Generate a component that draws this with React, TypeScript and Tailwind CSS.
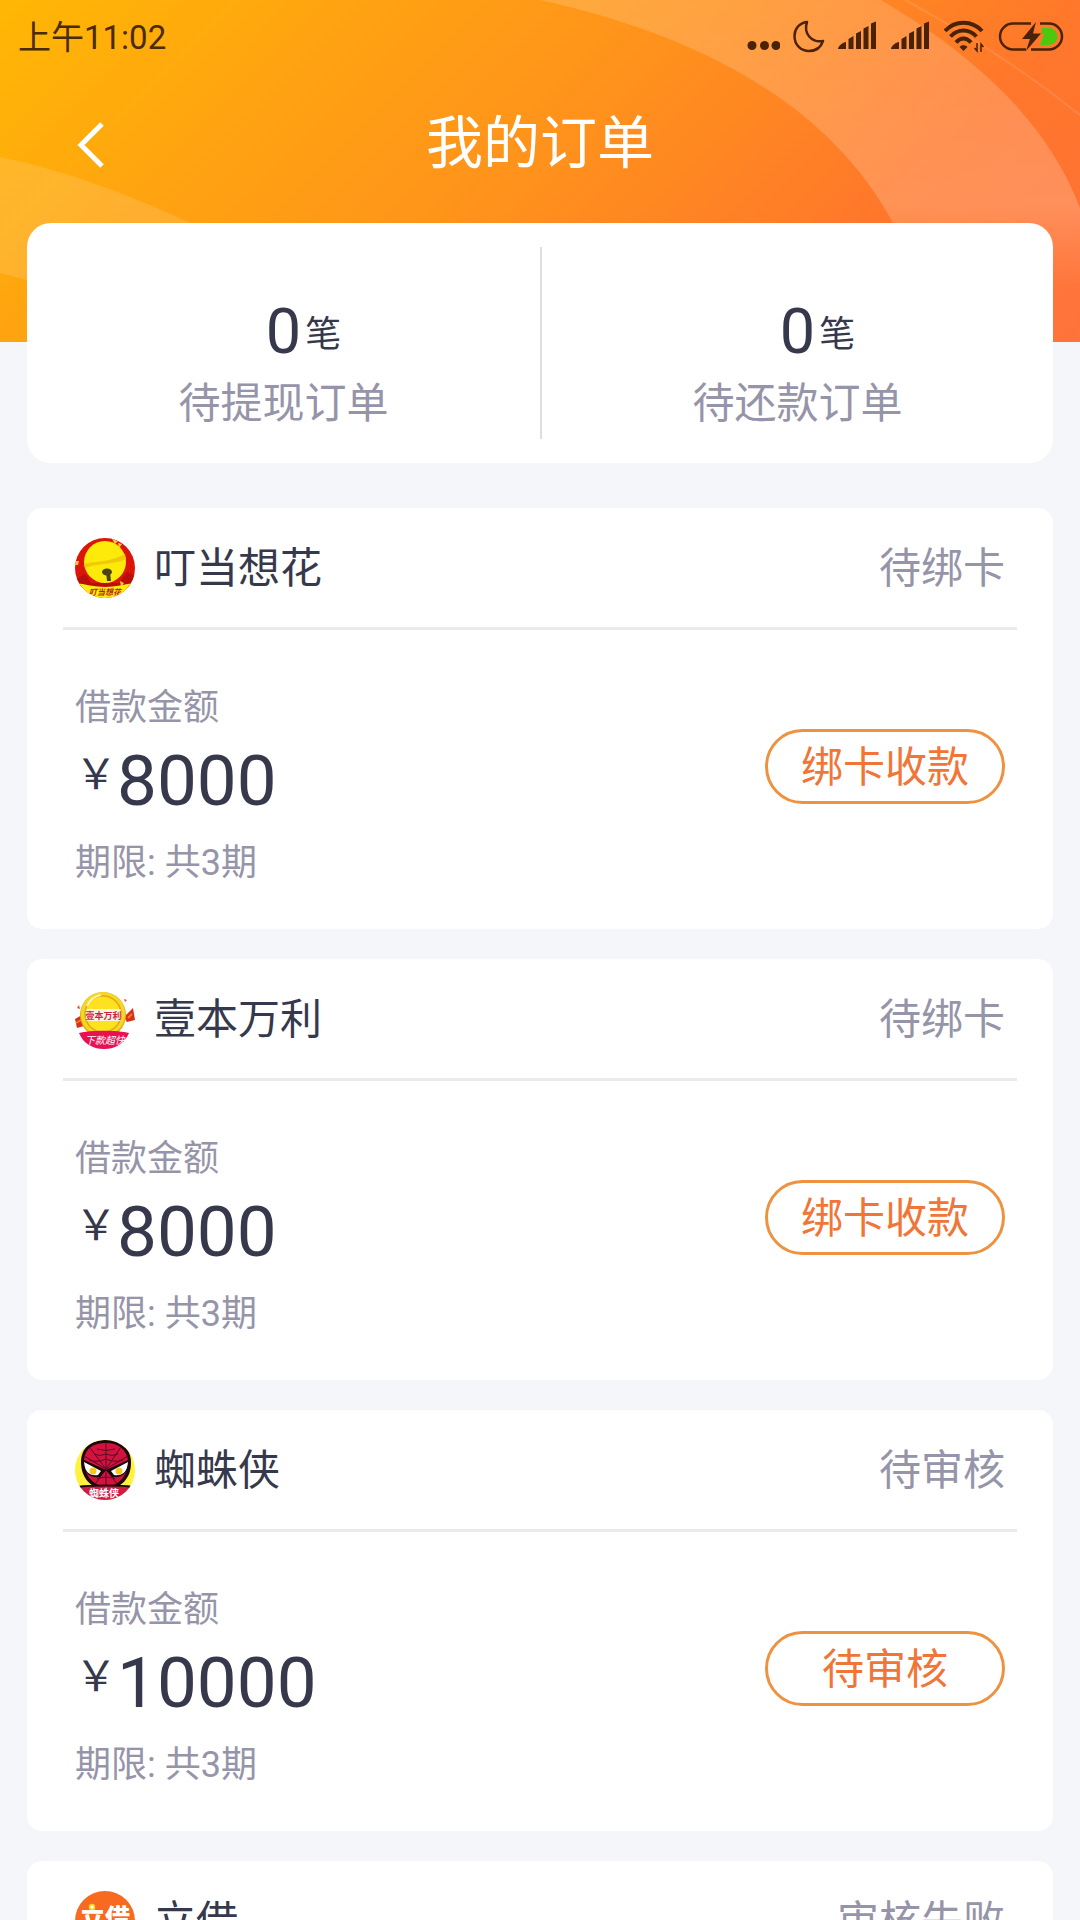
import type { ReactNode } from 'react';

type Order = {
  name: string;
  status: string;
  logo: ReactNode;
  amount?: string;
  term?: string;
  action?: string;
};

const logoFont = '"Noto Sans CJK SC", sans-serif';

const DingdangLogo = () => (
  <svg className="w-[60px] h-[60px] rounded-full" viewBox="0 0 60 60">
    <rect width="60" height="60" fill="#dc1409" />
    <path d="M0 42 L10 36 L16 45 H44 L52 34 L60 38 V50 H0Z" fill="#b80f0a" />
    <circle cx="30" cy="24" r="21" fill="#fdea0b" />
    <path d="M9 26 C20 23 36 24 50 16 L51 21 C38 27 22 25 10 30Z" fill="#eecb06" />
    <path d="M37 1 l6 2 -3 3Z M43 5 l4 1 -3 4Z M0 23 h4 l-1 4 -3 0Z M45 43 l4 2 -3 4Z" fill="#ffc93a" />
    <path d="M0 45 C10 46 20 49 30 49 C40 49 50 46 60 45 V60 H0Z" fill="#ffec12" />
    <ellipse cx="32" cy="34" rx="5" ry="3.5" fill="#4b4310" />
    <path d="M31 34 L35 34 L36 43 L32 43Z" fill="#4b4310" />
    <text x="30" y="57" fontSize="8" fontWeight="700" fontStyle="italic" textAnchor="middle" fill="#b3260b" fontFamily={logoFont}>叮当想花</text>
  </svg>
);

const YibenLogo = () => (
  <svg className="w-[60px] h-[60px]" viewBox="0 0 60 60">
    <path d="M0 30 L7 26 L9 37 L2 39Z" fill="#d8301c" />
    <path d="M49 28 L58 19 L60 31 L52 33Z" fill="#d8301c" />
    <path d="M1 34 l5 -3 M53 29 l4 -4" stroke="#f3792a" strokeWidth="2" />
    <path d="M2 19 l2 -3 1 4Z M49 10 l3 1 -2 2Z" fill="#e84b26" />
    <circle cx="28" cy="26" r="23" fill="#e3b112" />
    <circle cx="28" cy="25" r="22" fill="#f6d628" />
    <circle cx="28" cy="25" r="18" fill="#ffe21f" stroke="#e2ab10" strokeWidth="1.5" />
    <path d="M12 17 A19 19 0 0 1 26 6" fill="none" stroke="#fff6a8" strokeWidth="2" />
    <rect x="11" y="20" width="35" height="12" rx="2" fill="#fff3e6" />
    <text x="28.500" y="29.500" fontSize="9" fontWeight="700" textAnchor="middle" fill="#d01f3b" fontFamily={logoFont}>壹本万利</text>
    <path d="M4 44 C15 41 43 41 54 44 C50 54 41 60 29 60 C17 60 8 54 4 44Z" fill="#ea1152" />
    <text x="30" y="55" fontSize="10" fontStyle="italic" textAnchor="middle" fill="#fff" fontFamily={logoFont}>下款超快</text>
  </svg>
);

const SpiderLogo = () => (
  <svg className="w-[60px] h-[60px] rounded-full" viewBox="0 0 60 60">
    <rect width="60" height="60" fill="#fff23a" />
    <path d="M6 22 C6 7 17 0 31 0 C45 0 56 7 56 23 C56 38 46 49 31 49 C16 49 6 38 6 22Z" fill="#1c070c" />
    <path d="M9 20 C10 8 19 3 31 3 C43 3 51 9 53 20 C53 36 44 46 31 46 C18 46 9 36 9 20Z" fill="#d3123f" />
    <g fill="none" stroke="#5a0c22" strokeWidth="1">
      <path d="M31 3 V46 M31 29 L15 8 M31 29 L46 7 M31 29 L9 16 M31 29 L53 16 M31 29 L20 44 M31 29 L42 44" />
      <path d="M19 14 Q25 17 31 14 Q37 17 43 14 M14 20 Q22 23 31 19 Q40 23 48 20 M22 39 Q31 35 40 39 M22 9 Q31 12 40 9" />
    </g>
    <path d="M7 19 L31 30 L25 37 C16 38 9 35 7 19Z M55 19 L31 30 L37 37 C46 38 53 35 55 19Z" fill="#1c070c" />
    <path d="M9 22 L26 31 L23 35 C15 36 10 33 9 22Z M53 22 L36 31 L39 35 C47 36 52 33 53 22Z" fill="#fff" />
    <circle cx="18" cy="31" r="3.5" fill="#f4c91e" />
    <circle cx="44" cy="31" r="3.5" fill="#f4c91e" />
    <path d="M0 48 C10 45 50 45 60 48 V60 H0Z" fill="#cf1c45" />
    <path d="M3 47 C14 45 48 45 57 47" fill="none" stroke="#1c070c" strokeWidth="2" />
    <text x="29" y="57" fontSize="10" fontWeight="700" textAnchor="middle" fill="#fff" fontFamily={logoFont}>蜘蛛侠</text>
  </svg>
);

const LijieLogo = () => (
  <svg className="w-[60px] h-[60px] rounded-full" viewBox="0 0 60 60">
    <rect width="60" height="60" fill="#f76a20" />
    <text x="30" y="36" fontSize="25" fontWeight="900" textAnchor="middle" fill="#fff" fontFamily={logoFont}>立借</text>
    <circle cx="17" cy="16" r="2.500" fill="none" stroke="#ffd21c" strokeWidth="1.5" />
  </svg>
);

const orders: Order[] = [
  { name: '叮当想花', status: '待绑卡', logo: <DingdangLogo />, amount: '8000', term: '期限: 共3期', action: '绑卡收款' },
  { name: '壹本万利', status: '待绑卡', logo: <YibenLogo />, amount: '8000', term: '期限: 共3期', action: '绑卡收款' },
  { name: '蜘蛛侠', status: '待审核', logo: <SpiderLogo />, amount: '10000', term: '期限: 共3期', action: '待审核' },
  { name: '立借', status: '审核失败', logo: <LijieLogo /> },
];

const summary = [
  { count: 0, label: '待提现订单' },
  { count: 0, label: '待还款订单' },
];

const HeaderBackground = () => (
  <div className="absolute inset-x-0 top-0 h-[342px] overflow-hidden bg-[linear-gradient(135deg,#ffb704_0%,#ffa311_25%,#ff911c_50%,#ff772b_77%,#ff7038_100%)]">
    <svg className="w-full h-full" viewBox="0 0 1080 342" preserveAspectRatio="none">
      <defs>
        <linearGradient id="band" x1="0" y1="0" x2="0" y2="1">
          <stop offset="0" stopColor="#fff" stopOpacity="0.16" />
          <stop offset="0.6" stopColor="#fff" stopOpacity="0.2" />
          <stop offset="0.85" stopColor="#fff" stopOpacity="0.02" />
        </linearGradient>
      </defs>
      <path d="M540 0 C700 35 830 105 893 223 L910 342 H1080 V208 C1045 115 965 50 881 0Z" fill="url(#band)" />
      <path d="M0 157 C70 172 130 195 190 223 V342 C120 310 60 288 0 273Z" fill="#fff" fillOpacity="0.13" />
      <path d="M905 0 C970 35 1030 75 1080 115" fill="none" stroke="#fff" strokeOpacity="0.1" strokeWidth="2" />
    </svg>
  </div>
);

const Signal = () => (
  <svg className="w-10 h-10" viewBox="0 0 40 40" fill="#4a2206">
    <path d="M0 33 C0 30 5 26 8 26 V33Z" />
    <path d="M10.500 23 L15.500 20 V33 H10.500Z M18 17.500 L23 15 V33 H18Z M25.500 12.500 L30.500 10 V33 H25.500Z M33 7.500 L38 5.500 V33 H33Z" />
  </svg>
);

const StatusBar = () => (
  <div className="flex items-center justify-between h-[72px] pl-[18px] pr-4 text-[#4a2a00]">
    <span className="pt-[3px] text-[33px] leading-[48px]">上午11:02</span>
    <div className="flex items-center gap-[13px]">
      <svg className="w-[33px] h-10" viewBox="0 0 33 40" fill="#4a2206">
        <circle cx="5" cy="29.500" r="4.500" />
        <circle cx="17.500" cy="29.500" r="4.500" />
        <circle cx="29" cy="29.500" r="4.500" />
      </svg>
      <svg className="w-8 h-10" viewBox="0 0 32 40" fill="none" stroke="#4a2206" strokeWidth="2.500" strokeLinejoin="round">
        <path d="M14 6 C6 7 1.500 13 1.500 20 C1.500 29 8 35 16 35 C23 35 28 31 30 25 C19 27 10 18 14 6Z" />
      </svg>
      <Signal />
      <Signal />
      <svg className="w-[41px] h-10" viewBox="0 0 41 40" fill="none" stroke="#4a2206" strokeWidth="4">
        <path d="M1 15 C11 4 28 4 38 15" />
        <path d="M6.500 20.500 C14 12.500 25 12.500 32.500 20.500" />
        <path d="M12 26.500 C16.500 21 22.500 21 27 26.500" />
        <path d="M19.500 35 L15.500 31 C17.500 28.500 21.500 28.500 23.500 31Z" fill="#4a2206" stroke="none" />
        <path d="M33 27 V35 L30.500 32 M37 36 V28 L39.500 31" strokeWidth="1.5" />
      </svg>
      <svg className="w-[66px] h-10" viewBox="0 0 66 40" fill="none" stroke="#4a2206" strokeWidth="2.500">
        <path d="M33 7.500 H15 A13 13 0 0 0 15 33.500 H28" />
        <path d="M42 7.500 H51 A13 13 0 0 1 51 33.500 H33" />
        <path d="M44 12 H51 A8.500 8.500 0 0 1 51 29 H42 L46 18 H43Z" fill="#4cc80f" stroke="none" />
        <path d="M38 6 L24 23 H32 L28 35 L43 17.500 H35Z" fill="#4a2206" stroke="none" />
      </svg>
    </div>
  </div>
);

const OrderCard = ({ order }: { order: Order }) => (
  <article className="bg-white rounded-[15px]">
    <div className="flex items-center justify-between h-[119px] px-12">
      <div className="flex items-center gap-[19px]">
        {order.logo}
        <h2 className="pt-[3px] text-[42px] leading-[60px] text-[#36384c]">{order.name}</h2>
      </div>
      <span className="pt-[3px] text-[42px] leading-[60px] text-[#9694a9]">{order.status}</span>
    </div>
    <div className="mx-9 h-[3px] bg-[#ebebed]" />
    {order.amount && (
      <div className="flex items-start justify-between px-12 pt-[54px] pb-[42px]">
        <div>
          <p className="text-[36px] leading-[48px] text-[#9694a9]">借款金额</p>
          <p className="flex items-start mt-[13px] text-[#36384c]">
            <span className="text-[42px] leading-[60px]">￥</span>
            <span className="text-[71px] leading-[72px]">{order.amount}</span>
          </p>
          <p className="mt-[22px] text-[36px] leading-[48px] text-[#9694a9]">{order.term}</p>
        </div>
        <button type="button" className="mt-[45px] w-60 h-[75px] pt-[3px] rounded-full border-3 border-[#ee9240] text-[42px] leading-[60px] text-[#f07536]">
          {order.action}
        </button>
      </div>
    )}
  </article>
);

const App = () => {
  return (
    <div className="relative h-screen overflow-y-auto [scrollbar-width:none] bg-[#f5f6f9] font-[Roboto,'Noto_Sans_CJK_SC',sans-serif]">
      <HeaderBackground />
      <div className="relative">
        <StatusBar />
        <header className="grid grid-cols-[1fr_auto_1fr] items-center h-[151px] pb-[7px] px-[66px] text-white">
          <button type="button" aria-label="返回" className="w-12 h-12">
            <svg className="w-12 h-12" viewBox="0 0 48 48" fill="none" stroke="currentColor" strokeWidth="5">
              <path d="M36 4 L15 25 L36 46" />
            </svg>
          </button>
          <h1 className="text-[57px] leading-[80px]">我的订单</h1>
        </header>

        <main className="px-[27px]">
          <section className="grid grid-cols-2 h-60 py-6 mb-[45px] bg-white rounded-[24px]">
            {summary.map((item) => (
              <div key={item.label} className="pt-[53px] border-[#dededf] not-first:border-l-2 text-[#36384c]">
                <p className="grid grid-cols-[1fr_auto_1fr] items-end gap-1">
                  <span className="col-start-2 text-[63px] leading-[64px]">{item.count}</span>
                  <span className="text-[36px] leading-[58px]">笔</span>
                </p>
                <p className="mt-4 text-center text-[42px] leading-[48px] text-[#9694a9]">{item.label}</p>
              </div>
            ))}
          </section>

          <div className="flex flex-col gap-[30px] pb-[30px]">
            {orders.map((order) => (
              <OrderCard key={order.name} order={order} />
            ))}
          </div>
        </main>
      </div>
    </div>
  );
};

export default App;
